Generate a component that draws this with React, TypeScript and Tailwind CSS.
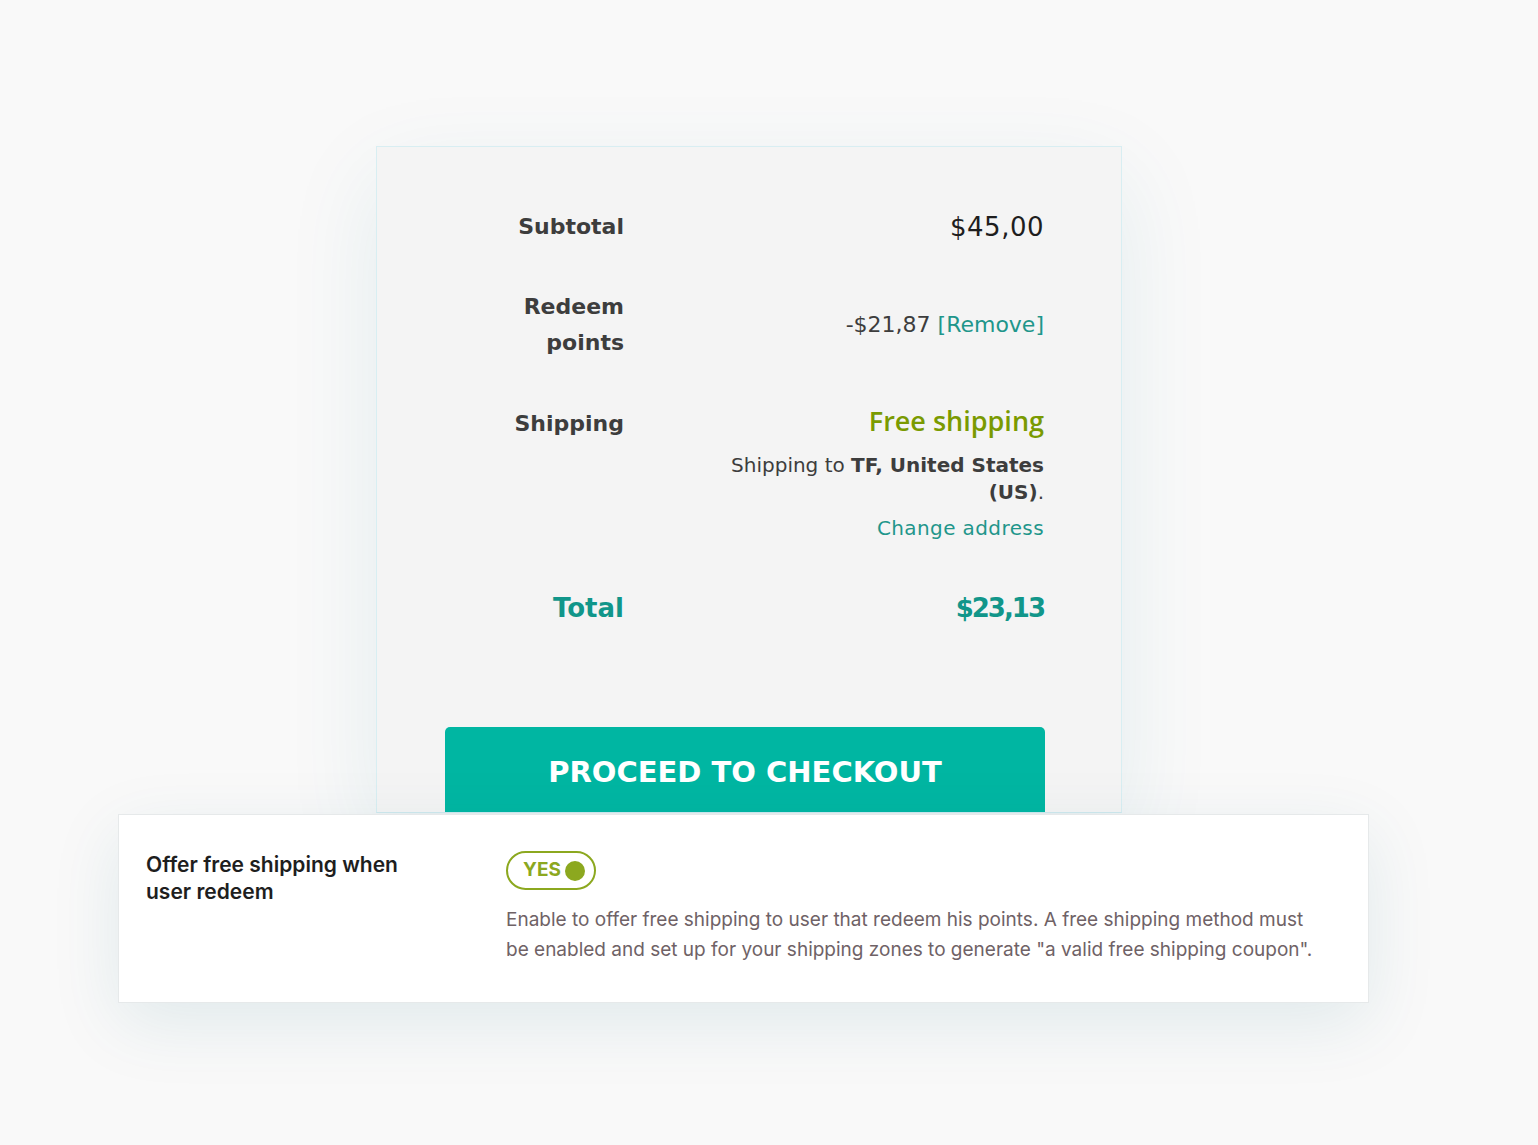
import React from "react";

export default function App() {
  return (
    <div className="min-h-[1145px] w-[1538px] bg-[#f9f9f9] pt-[146px] overflow-hidden">
      <div className="ml-[376px] w-[746px] bg-[#f4f4f4] border border-[#d8eef2] border-b-[#cfe9ee] shadow-[0_30px_90px_rgba(0,110,130,0.09)] overflow-hidden font-['DejaVu_Sans',sans-serif]">
        <div className="pl-[68px] pr-[77px] pt-[62px]">
          {/* Subtotal */}
          <div className="grid grid-cols-[179px_1fr] items-center">
            <div className="text-right text-[22px] leading-[36px] font-bold text-[#3d3d3d]">Subtotal</div>
            <div className="text-right text-[26px] leading-[36px] text-[#1e1e1e] tracking-[0.5px]">$45,00</div>
          </div>
          {/* Redeem */}
          <div className="grid grid-cols-[179px_1fr] items-center mt-[44px]">
            <div className="text-right text-[22px] leading-[36px] font-bold text-[#3d3d3d]">
              Redeem
              <br />
              points
            </div>
            <div className="text-right text-[22px] leading-[36px] text-[#3d3d3d]">
              -$21,87 <span className="text-[#1f968b]">[Remove]</span>
            </div>
          </div>
          {/* Shipping */}
          <div className="grid grid-cols-[179px_1fr] items-start mt-[42px]">
            <div className="text-right text-[22px] leading-[36px] font-bold text-[#3d3d3d] mt-[3px]">Shipping</div>
            <div className="text-right">
              <div className="text-[27px] leading-[36px] font-semibold text-[#7a9a01] font-['Open_Sans',sans-serif]">Free shipping</div>
              <div className="mt-[13px] text-[20px] leading-[27px] text-[#3d3d3d]">
                <div>
                  Shipping to <span className="font-bold">TF, United States</span>
                </div>
                <div>
                  <span className="font-bold">(US)</span>.
                </div>
              </div>
              <div className="mt-[9px] text-[20px] leading-[27px] text-[#1f968b] tracking-[0.4px]">Change address</div>
            </div>
          </div>
          {/* Total */}
          <div className="grid grid-cols-[179px_1fr] items-center mt-[48px]">
            <div className="text-right text-[26px] leading-[36px] font-bold text-[#11968a]">Total</div>
            <div className="text-right text-[26px] leading-[36px] font-bold text-[#11968a] tracking-[-2px]">$23,13</div>
          </div>
          {/* Button */}
          <div className="mt-[101px] w-[600px] h-[85px] rounded-t-[5px] bg-[#00b6a2] flex items-center justify-center pt-[6px]">
            <span className="text-white text-[29px] font-bold">PROCEED TO CHECKOUT</span>
          </div>
        </div>
      </div>
      <div className="ml-[118px] mt-[1px] w-[1251px] bg-white border border-[#e6e9ea] shadow-[0_20px_70px_rgba(0,100,120,0.10)] grid grid-cols-[360px_1fr] pl-[27px] pt-[36px] pb-[37px] font-['Inter',sans-serif]">
        <div className="text-[21px] leading-[27px] font-semibold text-[#1e1e1e]">
          Offer free shipping when
          <br />
          user redeem
        </div>
        <div>
          <div className="w-[90px] h-[39px] rounded-full border-2 border-[#8ca81f] flex items-center pl-[15px] pr-[9px] justify-between">
            <span className="text-[19px] font-bold text-[#8ca81f]">YES</span>
            <span className="w-[20px] h-[20px] rounded-full bg-[#8ca81f]" />
          </div>
          <p className="mt-[15px] text-[19px] leading-[30px] text-[#6f6266] w-[812px]">
            Enable to offer free shipping to user that redeem his points. A free shipping method must be enabled and set up for your shipping zones to generate "a valid free shipping coupon".
          </p>
        </div>
      </div>
    </div>
  );
}
